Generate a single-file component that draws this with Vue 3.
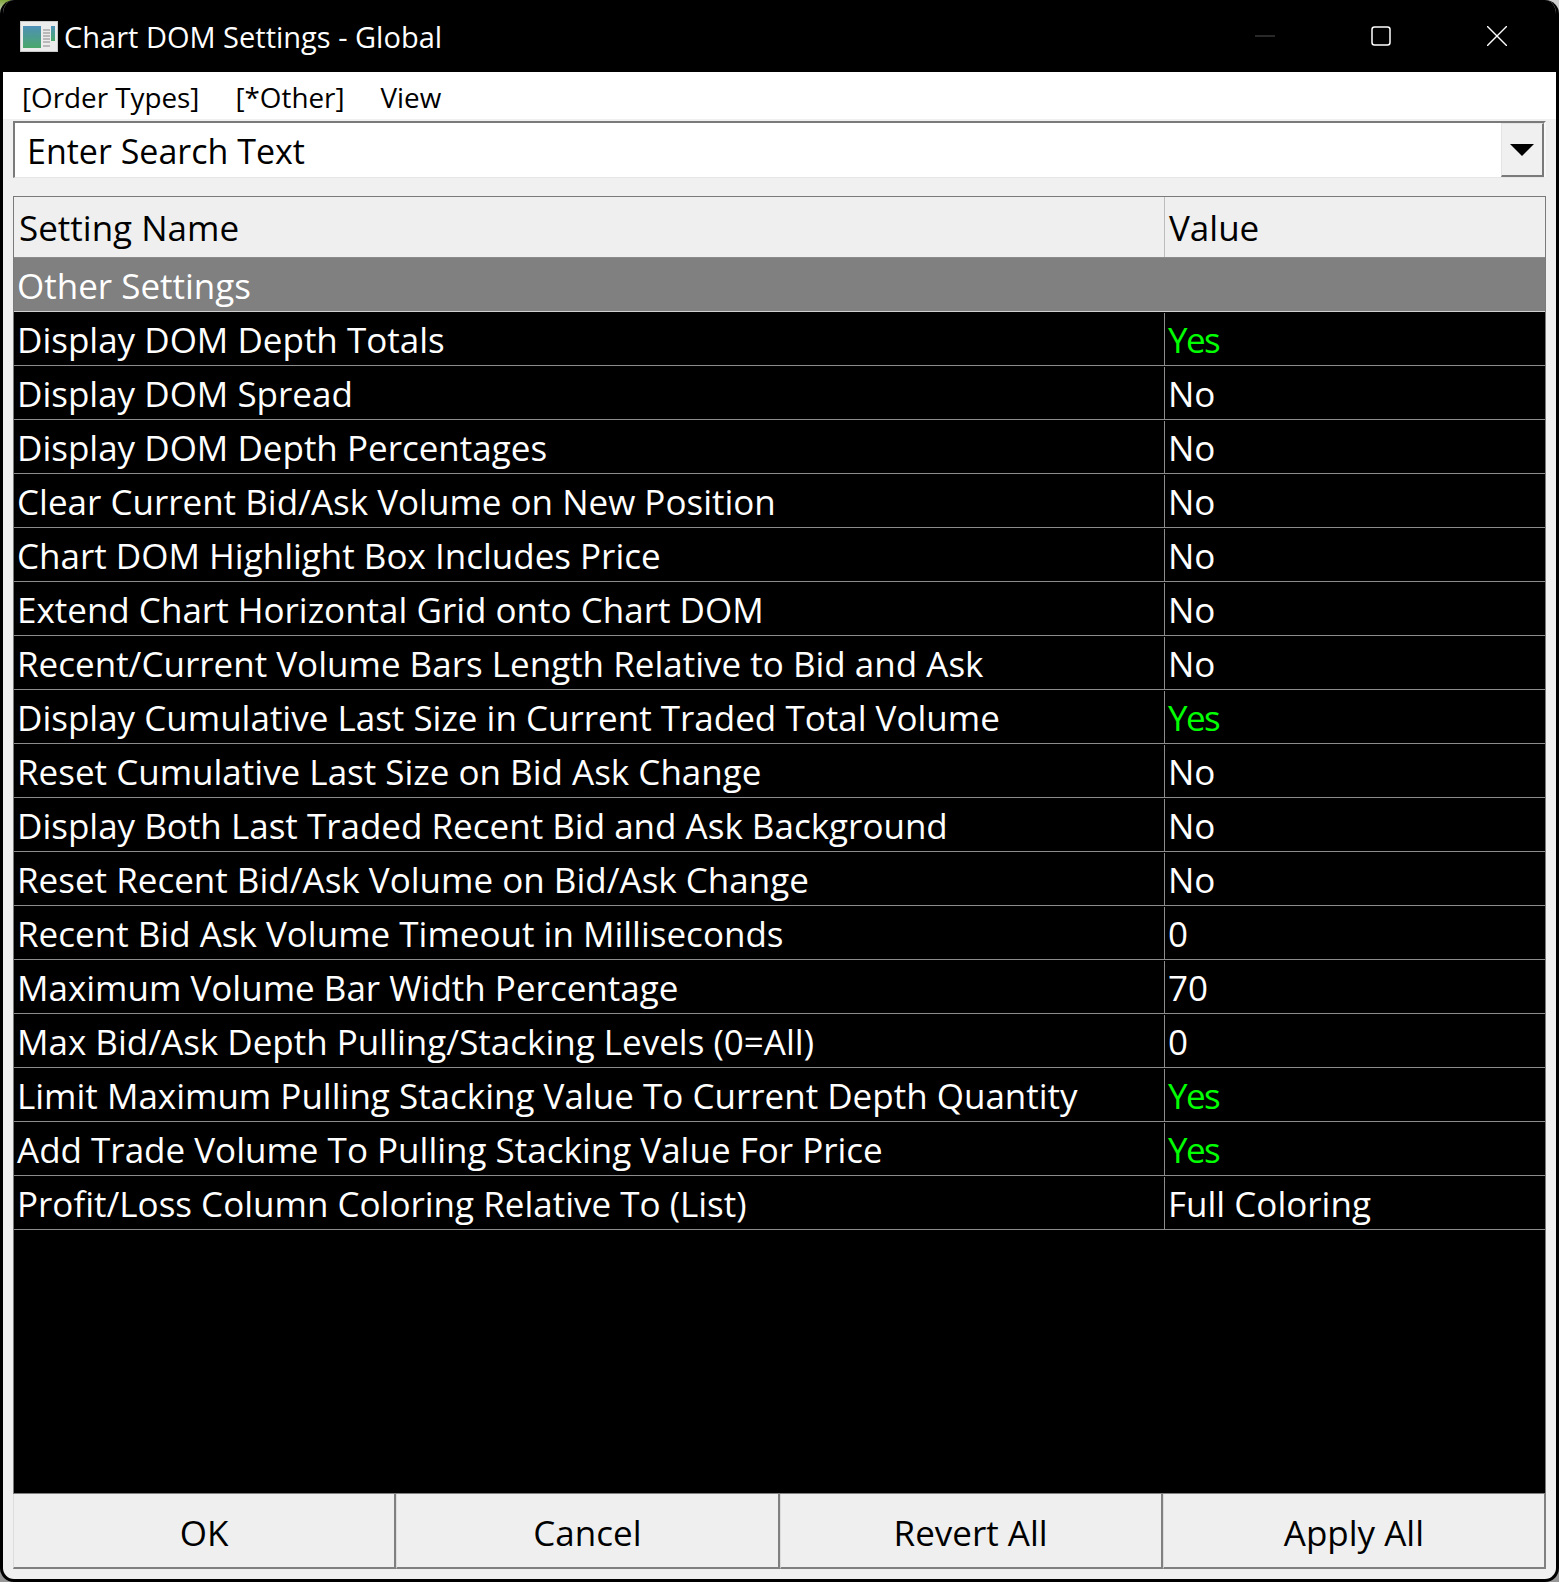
<script setup>
const rows = [
  ['Display DOM Depth Totals', 'Yes'],
  ['Display DOM Spread', 'No'],
  ['Display DOM Depth Percentages', 'No'],
  ['Clear Current Bid/Ask Volume on New Position', 'No'],
  ['Chart DOM Highlight Box Includes Price', 'No'],
  ['Extend Chart Horizontal Grid onto Chart DOM', 'No'],
  ['Recent/Current Volume Bars Length Relative to Bid and Ask', 'No'],
  ['Display Cumulative Last Size in Current Traded Total Volume', 'Yes'],
  ['Reset Cumulative Last Size on Bid Ask Change', 'No'],
  ['Display Both Last Traded Recent Bid and Ask Background', 'No'],
  ['Reset Recent Bid/Ask Volume on Bid/Ask Change', 'No'],
  ['Recent Bid Ask Volume Timeout in Milliseconds', '0'],
  ['Maximum Volume Bar Width Percentage', '70'],
  ['Max Bid/Ask Depth Pulling/Stacking Levels (0=All)', '0'],
  ['Limit Maximum Pulling Stacking Value To Current Depth Quantity', 'Yes'],
  ['Add Trade Volume To Pulling Stacking Value For Price', 'Yes'],
  ['Profit/Loss Column Coloring Relative To (List)', 'Full Coloring']
]
const buttons = ['OK', 'Cancel', 'Revert All', 'Apply All']
</script>

<template>
  <div class="window">
    <header class="titlebar">
      <svg class="appicon" width="38" height="31" viewBox="0 0 38 31">
        <defs>
          <linearGradient id="g1" x1="0" y1="0" x2="0" y2="1">
            <stop offset="0" stop-color="#4f90b8" />
            <stop offset="1" stop-color="#4aa86a" />
          </linearGradient>
        </defs>
        <rect width="38" height="31" fill="#c9c9c9" />
        <rect x="1" y="1" width="36" height="29" fill="#ececec" />
        <rect x="3" y="5" width="18" height="22" fill="url(#g1)" />
        <path d="M23 9h7M23 12h7M23 15h7M23 18h7M23 21h7M23 25h7" stroke="#a8a8a8" stroke-width="1.5" />
        <rect x="31" y="5" width="4" height="15" fill="url(#g1)" />
      </svg>
      <span class="title">Chart DOM Settings - Global</span>
      <div class="controls">
        <svg width="20" height="20" viewBox="0 0 20 20"><path d="M0 10h20" stroke="#3c3c3c" stroke-width="1.4" /></svg>
        <svg width="20" height="20" viewBox="0 0 20 20"><rect x="1" y="1" width="18" height="18" rx="2.5" fill="none" stroke="#fff" stroke-width="1.5" /></svg>
        <svg width="20" height="20" viewBox="0 0 20 20"><path d="M0 0L20 20M20 0L0 20" stroke="#fff" stroke-width="1.4" /></svg>
      </div>
    </header>
    <nav class="menu">
      <span>[Order Types]</span>
      <span>[*Other]</span>
      <span>View</span>
    </nav>
    <main class="body">
      <div class="search">
        <span class="search-text">Enter Search Text</span>
        <div class="drop"><i class="arrow"></i></div>
      </div>
      <section class="table">
        <div class="row head">
          <div class="name">Setting Name</div>
          <div class="value">Value</div>
        </div>
        <div class="row group">Other Settings</div>
        <div v-for="r in rows" :key="r[0]" class="row item">
          <div class="name">{{ r[0] }}</div>
          <div class="value" :class="{ yes: r[1] === 'Yes' }">{{ r[1] }}</div>
        </div>
        <div class="fill"></div>
      </section>
      <div class="buttons">
        <button v-for="b in buttons" :key="b" type="button">{{ b }}</button>
      </div>
    </main>
  </div>
</template>

<style>
html, body { margin: 0; }
html {
  background:
    linear-gradient(#7ea63a, #d8d8d8) 0 0 / 14px 14px no-repeat,
    linear-gradient(#cfcfcf, #cfcfcf) 100% 0 / 14px 14px no-repeat,
    #969696;
}
</style>

<style scoped>
.window {
  width: 1559px;
  height: 1582px;
  box-sizing: border-box;
  border: 3px solid #000;
  border-top: 0;
  border-radius: 14px;
  background: #f0f0f0;
  display: flex;
  flex-direction: column;
  overflow: hidden;
  font-family: "Open Sans", sans-serif;
}
.titlebar {
  height: 72px;
  flex: none;
  background: #000;
  color: #fff;
  display: flex;
  align-items: center;
  padding: 0 52px 0 20px;
  margin: 0 -3px;
}
.appicon { margin-right: 6px; }
.title { font-size: 29px; padding-top: 1px; }
.controls {
  margin-left: auto;
  display: flex;
  gap: 96px;
  align-items: center;
}
.menu {
  height: 47px;
  flex: none;
  background: #fff;
  display: flex;
  align-items: center;
  gap: 36px;
  padding: 3px 0 0 19px;
  box-sizing: border-box;
  font-size: 27.8px;
}
.body {
  flex: 1;
  display: flex;
  flex-direction: column;
  padding: 2px 10px 10px;
  min-height: 0;
}
.search {
  height: 57px;
  flex: none;
  box-sizing: border-box;
  background: #fff;
  border-top: 2px solid #7a7a7a;
  border-left: 2px solid #7a7a7a;
  border-bottom: 1px solid #e6e6e6;
  border-right: 2px solid #f8f8f8;
  display: flex;
  align-items: center;
  padding-left: 12px;
}
.search-text { font-size: 34px; padding-top: 1px; }
.drop {
  margin-left: auto;
  width: 43px;
  height: 54px;
  align-self: flex-start;
  box-sizing: border-box;
  background: #f0f0f0;
  border: 1px solid #e4e4e4;
  border-right: 2px solid #7a7a7a;
  border-bottom: 2px solid #7a7a7a;
  display: flex;
  align-items: center;
  justify-content: center;
}
.arrow {
  width: 0;
  height: 0;
  border-left: 12px solid transparent;
  border-right: 12px solid transparent;
  border-top: 12px solid #000;
}
.table {
  margin-top: 18px;
  flex: 1;
  min-height: 0;
  display: flex;
  flex-direction: column;
  background: #000;
  border-top: 1px solid #7a7a7a;
  border-left: 1px solid #7a7a7a;
  border-right: 1px solid #7a7a7a;
  font-size: 35px;
}
.row {
  display: flex;
  flex: none;
  box-sizing: border-box;
  height: 54px;
  align-items: stretch;
}
.name {
  width: 1150px;
  flex: none;
  padding-left: 3px;
  display: flex;
  align-items: center;
  box-sizing: border-box;
  white-space: nowrap;
}
.value {
  flex: 1;
  padding-left: 3px;
  display: flex;
  align-items: center;
  border-left: 1px solid #8c8c8c;
}
.head {
  height: 60px;
  background: #efefef;
  color: #000;
}
.head .name { padding: 1px 0 0 5px; }
.head .value { padding: 1px 0 0 4px; border-left-color: #bdbdbd; }
.group.row {
  height: 55px;
  background: #808080;
  color: #fff;
  align-items: center;
  padding: 2px 0 0 3px;
  border-top: 1px solid #8c8c8c;
  border-bottom: 1px solid #d0d0d0;
}
.item {
  background: #000;
  color: #fff;
  border-bottom: 1px solid #8c8c8c;
  padding-top: 1px;
}
.yes { color: #00ff00; letter-spacing: -1.6px; }
.fill { flex: 1; }
.buttons {
  flex: none;
  height: 75px;
  display: grid;
  grid-template-columns: repeat(4, 1fr);
  border-top: 1px solid #808080;
}
button {
  font: inherit;
  font-size: 35px;
  color: #000;
  background: #efefef;
  border: 0;
  border-right: 2px solid #808080;
  border-bottom: 2px solid #808080;
  border-left: 1px solid #dcdcdc;
  padding: 3px 0 0;
}
</style>
